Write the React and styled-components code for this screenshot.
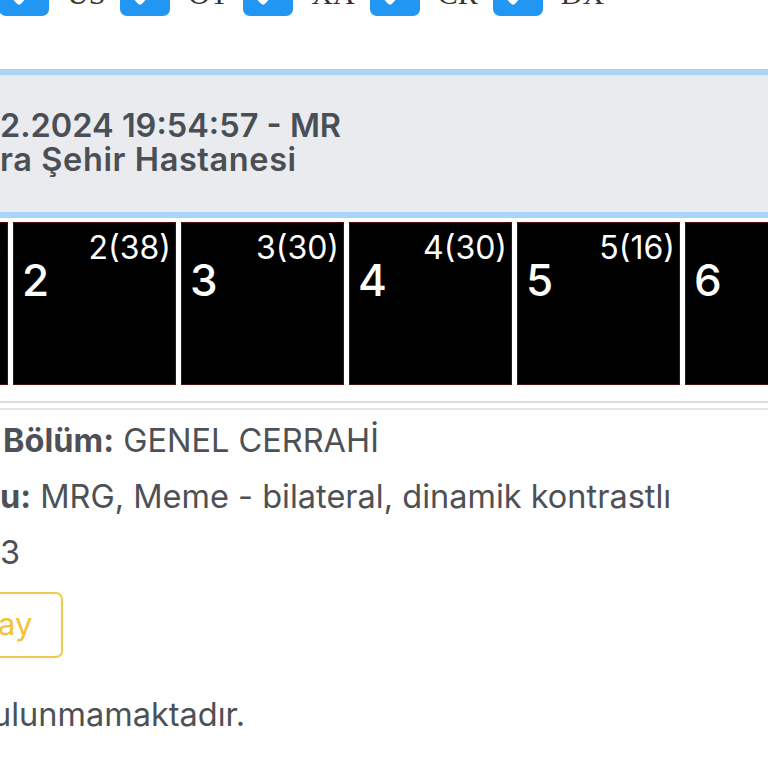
import React from 'react';
import styled, { createGlobalStyle } from 'styled-components';

const GlobalStyle = createGlobalStyle`
  html, body {
    margin: 0;
    padding: 0;
    background: #ffffff;
    overflow: hidden;
  }
  body {
    font-family: Inter, "Liberation Sans", Arial, sans-serif;
  }
`

const modalities = ['US', 'OT', 'XA', 'CR', 'DX']

const series = [
  { no: 1, count: 30 },
  { no: 2, count: 38 },
  { no: 3, count: 30 },
  { no: 4, count: 30 },
  { no: 5, count: 16 },
  { no: 6, count: 12 },
]

function Check() {
  return (
    <svg width="50" height="50" viewBox="0 0 50 50">
      <path d="M11 26 L20 35.5 L38 16" fill="none" stroke="#fff" strokeWidth="6" strokeLinecap="round" strokeLinejoin="round" />
    </svg>
  )
}

function App() {
  return (
    <Page>
      <GlobalStyle />

      <ModalityRow>
        {modalities.map((m) => (
          <Modality key={m}>
            <CheckBox><Check /></CheckBox>
            <ModalityLabel>{m}</ModalityLabel>
          </Modality>
        ))}
      </ModalityRow>

      <StudyPanel>
        <StudyTitle>2.2024 19:54:57 - MR</StudyTitle>
        <StudyPlace>Ankara Şehir Hastanesi</StudyPlace>
      </StudyPanel>

      <SeriesStrip>
        {series.map((s) => (
          <Thumb key={s.no}>
            <ThumbCount>{s.no}({s.count})</ThumbCount>
            <ThumbNo>{s.no}</ThumbNo>
          </Thumb>
        ))}
      </SeriesStrip>

      <Rule />
      <Rule light />

      <Details>
        <DetailLine shift={3}><b>Bölüm:</b> GENEL CERRAHİ</DetailLine>
        <DetailLine><b>u:</b> MRG, Meme - bilateral, dinamik kontrastlı</DetailLine>
        <DetailLine>3</DetailLine>
        <ApproveButton>Onay</ApproveButton>
        <EmptyNote>ulunmamaktadır.</EmptyNote>
      </Details>
    </Page>
  )
}

const Page = styled.div`
  width: 768px;
  height: 768px;
  overflow: hidden;
  display: flex;
  flex-direction: column;
`

const ModalityRow = styled.div`
  display: flex;
  align-items: flex-end;
  margin-top: -34px;
  margin-left: -1px;
  height: 50px;
  flex-shrink: 0;
`

const Modality = styled.label`
  display: flex;
  align-items: flex-end;
`

const CheckBox = styled.span`
  display: flex;
  width: 50px;
  height: 50px;
  border-radius: 7px;
  background: #2196f3;
`

const ModalityLabel = styled.span`
  font-family: "Liberation Serif", "Times New Roman", serif;
  font-size: 30px;
  line-height: 30px;
  color: #333;
  margin: 0 15px 7px 18px;
`

const StudyPanel = styled.div`
  margin-top: 53px;
  border-top: 6px solid #a9d4f6;
  border-bottom: 6px solid #a9d4f6;
  background: #e9ebef;
  height: 137px;
  color: #4a4f55;
  font-weight: 600;
  font-size: 32.5px;
  line-height: 33px;
  flex-shrink: 0;
`

const StudyTitle = styled.div`
  margin-top: 34px;
  white-space: nowrap;
`

const StudyPlace = styled.div`
  margin-left: -83px;
  margin-top: 1px;
  white-space: nowrap;
  letter-spacing: 0.6px;
`

const SeriesStrip = styled.div`
  display: flex;
  gap: 5px;
  margin-top: 4px;
  margin-left: -155px;
  flex-shrink: 0;
`

const Thumb = styled.div`
  position: relative;
  flex-shrink: 0;
  width: 163px;
  height: 163px;
  box-sizing: border-box;
  background: #000;
  border: 1px solid #4a1010;
  color: #fff;
`

const ThumbCount = styled.span`
  position: absolute;
  top: 9px;
  right: 4px;
  font-size: 32px;
  line-height: 32px;
`

const ThumbNo = styled.div`
  padding: 34px 0 0 8px;
  font-size: 44px;
  line-height: 46px;
  font-weight: 500;
`

const Rule = styled.div`
  flex-shrink: 0;
  height: 2px;
  background: ${({ light }) => (light ? '#e6e6e6' : '#dcdcdc')};
  margin-top: ${({ light }) => (light ? '5px' : '16px')};
`

const Details = styled.div`
  margin-top: 3px;
  color: #4d5156;
  font-size: 32.5px;
`

const DetailLine = styled.div`
  line-height: 56px;
  white-space: nowrap;
  padding-left: ${({ shift }) => shift || 0}px;

  b {
    font-weight: 700;
  }
`

const ApproveButton = styled.button`
  display: block;
  margin: 11px 0 0 -78px;
  height: 66px;
  padding: 0 29px 4px 32px;
  border: 2px solid #f3c94e;
  border-radius: 7px;
  background: #fff;
  color: #f2c23a;
  font-family: inherit;
  font-size: 31px;
`

const EmptyNote = styled.div`
  margin: 37px 0 0 -8px;
  line-height: 40px;
  white-space: nowrap;
`

export default App;
